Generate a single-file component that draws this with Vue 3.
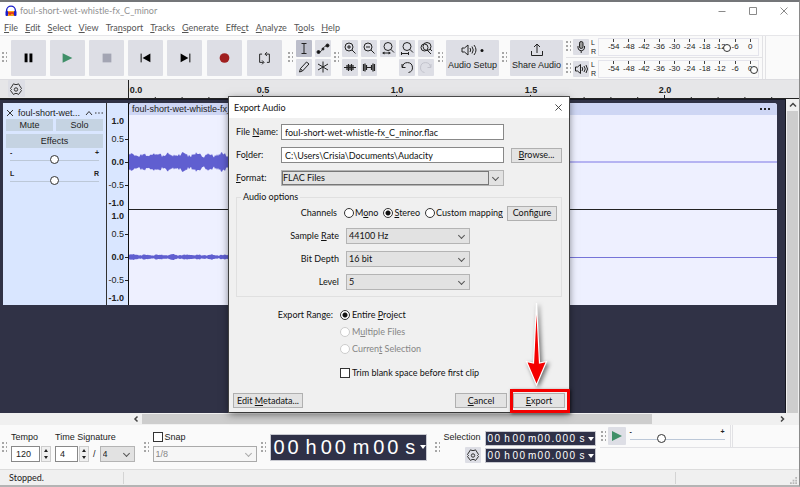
<script setup>
import { ref } from 'vue'

const menus = [
  ['', 'F', 'ile'], ['', 'E', 'dit'], ['', 'S', 'elect'], ['', 'V', 'iew'],
  ['Tra', 'n', 'sport'], ['', 'T', 'racks'], ['', 'G', 'enerate'], ['Effe', 'c', 't'],
  ['', 'A', 'nalyze'], ['T', 'o', 'ols'], ['', 'H', 'elp'],
]

const meterMarks = [-54, -48, -42, -36, -30, -24, -18, -12, -6, 0]
const meters = [
  { name: 'Record level', kind: 'mic', level: 83 },
  { name: 'Playback level', kind: 'speaker', level: 100 },
]

const secondWidth = 268
const majors = [0, 0.5, 1, 1.5, 2]
const minors = Array.from({ length: 25 }, (_, i) => i)

const channels = [
  { amp: 10, base: 4, zero: 47 },
  { amp: 3, base: 1, zero: 47 },
]

function wavePath(ch, seed) {
  let top = ''
  let bottom = ''
  for (let x = 0; x <= 140; x++) {
    const r = Math.abs(Math.sin(x * 12.9898 + seed) * 43758.5453) % 1
    const swell = 0.5 + 0.5 * Math.sin(x / 2.1 + seed)
    const a = ch.base + (ch.amp - ch.base) * (0.4 * swell + 0.6 * r)
    top += `${x ? 'L' : 'M'}${x} ${(ch.zero - a).toFixed(1)}`
    bottom = `L${x} ${(ch.zero + a).toFixed(1)}` + bottom
  }
  return top + bottom + 'Z'
}
const waves = channels.map((c, i) => wavePath(c, i * 5 + 1))

const bigDigits = [...'00h00m00s']
const smallDigits = [...'00h00m00.000s']
const cellClass = (c) => (c === '.' ? 'dot' : /\d/.test(c) ? 'digit' : 'mark')

const fileName = ref('foul-short-wet-whistle-fx_C_minor.flac')
const folder = ref('C:\\Users\\Crisia\\Documents\\Audacity')
const channelMode = ref('stereo')
const range = ref('entire')
const trim = ref(false)
const snap = ref(false)
const gain = ref(50)
const pan = ref(50)
const speed = ref(32)
const tempo = ref('120')
const beats = ref('4')
const gearPath = 'M5.500 2.800L7 3.500H9L10.500 2.800L13.500 7.500L12.500 8.500L13.500 9.500L10.500 13.500L9 12.500H7L5.500 13.500L2.500 9.500L3.500 8.500L2.500 7.500Z'
</script>

<template>
  <div class="app">
    <header class="titlebar">
      <svg class="logo" viewBox="0 0 12 12">
        <rect x="2" y="6" width="8" height="5" fill="#f5a31a" />
        <path d="M3 9l1-2 1 3 1-3 1 2 1-2 1 3" stroke="#e0301e" fill="none" />
        <path d="M1.6 7.5V5.5a4.4 4.4 0 0 1 8.8 0v2" stroke="#1a1ecb" stroke-width="1.4" fill="none" />
        <rect x="0.5" y="6" width="2.5" height="5" rx="1" fill="#1a1ecb" />
        <rect x="9" y="6" width="2.5" height="5" rx="1" fill="#1a1ecb" />
      </svg>
      <span class="title">foul-short-wet-whistle-fx_C_minor</span>
      <div class="wincontrols">
        <button aria-label="Minimize"><svg viewBox="0 0 8 8"><path d="M0.5 4.5h7" /></svg></button>
        <button aria-label="Maximize"><svg viewBox="0 0 8 8"><path d="M0.5 0.5h7v7h-7z" /></svg></button>
        <button aria-label="Close"><svg viewBox="0 0 8 8"><path d="M0.5 0.5l7 7M7.5 0.5l-7 7" /></svg></button>
      </div>
    </header>

    <nav class="menubar">
      <button v-for="m in menus" :key="m.join('')">{{ m[0] }}<u>{{ m[1] }}</u>{{ m[2] }}</button>
    </nav>

    <section class="toolbar">
      <i class="grip"></i>
      <div class="transport">
        <button aria-label="Pause"><svg viewBox="0 0 36 36"><path d="M14 14h3v9h-3zM19 14h3v9h-3z" fill="#000" /></svg></button>
        <button aria-label="Play"><svg viewBox="0 0 36 36"><path d="M13 13.500L23 18.500 13 23.500Z" fill="#3f8f68" /></svg></button>
        <button aria-label="Stop"><svg viewBox="0 0 36 36"><path d="M14 14h9v9h-9z" fill="#a3a5b3" /></svg></button>
        <button aria-label="Skip to start"><svg viewBox="0 0 36 36"><path d="M13.500 14v9" stroke="#000" /><path d="M23 14v9l-8-4.500z" fill="#000" /></svg></button>
        <button aria-label="Skip to end"><svg viewBox="0 0 36 36"><path d="M23.500 14v9" stroke="#000" /><path d="M14 14v9l8-4.500z" fill="#000" /></svg></button>
        <button aria-label="Record" class="spaced"><svg viewBox="0 0 36 36"><circle cx="18" cy="18.500" r="5" fill="#a01f1f" /></svg></button>
        <button aria-label="Loop" class="spaced"><svg viewBox="0 0 36 36" fill="none" stroke="#222"><path d="M15.500 14.500h-2.500v8.500h4M20.500 23h2.500v-8.500h-4" /><path d="M20.500 12.500l-2 2 2 2M15.500 21l2 2-2 2" /></svg></button>
      </div>
      <i class="grip"></i>
      <div class="tools two">
        <button aria-label="Selection tool" class="on"><svg viewBox="0 0 16 16"><path d="M5.500 3.500h5M5.500 13.500h5M8 3.500v10" /></svg></button>
        <button aria-label="Envelope tool"><svg viewBox="0 0 16 16"><path d="M3 12.500c5 0 4-7 10-7" /><circle cx="3.500" cy="12" r="1.500" fill="#111" /><circle cx="8" cy="9" r="1" fill="#111" /><circle cx="12.500" cy="5.500" r="1.500" fill="#111" /></svg></button>
        <button aria-label="Draw tool"><svg viewBox="0 0 16 16"><path d="M3.500 13l1-3.500 6-6.500 2.500 2-6.500 7zM4.500 9.500L6.500 12" /></svg></button>
        <button aria-label="Multi tool"><svg viewBox="0 0 16 16"><path d="M8 2.500v11M3 5l10 6M13 5L3 11" /></svg></button>
      </div>
      <i class="grip"></i>
      <div class="tools five">
        <button aria-label="Zoom in"><svg viewBox="0 0 16 16"><circle cx="7" cy="7" r="4" /><path d="M10 10l3.500 3.500M5 7h4M7 5v4" /></svg></button>
        <button aria-label="Zoom out"><svg viewBox="0 0 16 16"><circle cx="7" cy="7" r="4" /><path d="M10 10l3.500 3.500M5 7h4" /></svg></button>
        <button aria-label="Fit selection"><svg viewBox="0 0 16 16"><circle cx="8" cy="6.500" r="4" /><path d="M11 9.500l3 3M3 13h7" /><path d="M2 13l2.500-1.500v3zM11 13l-2.500-1.500v3z" fill="#222" stroke="none" /></svg></button>
        <button aria-label="Fit project"><svg viewBox="0 0 16 16"><circle cx="8" cy="6.500" r="4" /><path d="M11 9.500l3 3M2.500 13.500h7M2.500 12v3M9.500 12v3" /></svg></button>
        <button aria-label="Zoom toggle"><svg viewBox="0 0 16 16"><circle cx="9" cy="6.500" r="4" /><circle cx="6.500" cy="7.500" r="3.500" /><path d="M9 10l4 4M12 9l2 2" /></svg></button>
        <button aria-label="Trim audio"><svg viewBox="0 0 16 16"><path d="M2 8.500h12M5 6v5M6.500 5v7M8 6v5M9.500 5v7M11 6v5" stroke-width="1.200" /></svg></button>
        <button aria-label="Silence audio"><svg viewBox="0 0 16 16"><path d="M2.500 5v7M4 4.500v8M5.500 6v5M5 8.500h6M10.500 6v5M12 4.500v8M13.500 5v7" stroke-width="1.200" /></svg></button>
        <span></span>
        <button aria-label="Undo"><svg viewBox="0 0 16 16"><path d="M3 5v3.500h3.500M3.500 8a5 5 0 1 1 6 5.500" /></svg></button>
        <button aria-label="Redo" disabled><svg viewBox="0 0 16 16"><path d="M13 5v3.500H9.500M12.500 8a5 5 0 1 0-6 5.500" stroke="#c3c4cd" /></svg></button>
      </div>
      <i class="grip"></i>
      <button class="labelled">
        <svg viewBox="0 0 26 14" fill="none" stroke="#222"><path d="M2 5h2.500L8 2v10L4.500 9H2zM10 5q1.500 2 0 4M12 3.500q2.500 3.500 0 7M14 2q4 5 0 10" /><circle cx="22" cy="7.500" r="1.500" fill="#111" stroke="none" /></svg>
        Audio Setup
      </button>
      <i class="grip"></i>
      <button class="labelled">
        <svg viewBox="0 0 26 14" fill="none" stroke="#222"><path d="M7.500 8v4.500h11V8M13 10V1.500M10 4l3-3 3 3" /></svg>
        Share Audio
      </button>
      <div class="meters">
        <div v-for="m in meters" :key="m.name" class="meter">
          <i class="grip"></i>
          <button :aria-label="m.name">
            <svg v-if="m.kind === 'mic'" viewBox="0 0 16 16" fill="none" stroke="#222"><rect x="6.500" y="2.500" width="3.500" height="7" rx="1.700" fill="#999" /><path d="M5 7v2a3.300 3.300 0 0 0 6.500 0V7M8.200 12v2" /></svg>
            <svg v-else viewBox="0 0 16 16" fill="none" stroke="#222"><path d="M2.500 6h2l3-2.500v9L4.500 10h-2zM9 6q1.500 2 0 4M11 5q2.500 3 0 6M13 4q3 4 0 8" /></svg>
          </button>
          <div class="lr"><span>L</span><span>R</span></div>
          <div class="scale">
            <span v-for="n in meterMarks" :key="n">{{ n }}</span>
            <b class="knob" :style="{ left: m.level + '%' }"></b>
          </div>
        </div>
      </div>
      <div class="rest"></div>
    </section>

    <section class="timeline">
      <button aria-label="Timeline options"><svg viewBox="0 0 16 16"><path :d="gearPath" /><circle cx="8" cy="8.500" r="1.700" /></svg></button>
      <svg class="ticks">
        <path d="M0.500 0V20" stroke="#222" />
        <path v-for="i in minors" :key="i" :d="`M${i * 26.8 + 0.5} ${i % 5 ? 17 : 15}V20`" stroke="#222" />
        <text v-for="m in majors" :key="m" :x="m ? m * secondWidth + 1 : 8" y="13" text-anchor="middle">{{ m.toFixed(1) }}</text>
      </svg>
    </section>

    <main class="workspace">
      <div class="tracks">
        <aside class="panel">
          <div class="trackhead">
            <button aria-label="Delete track"><svg viewBox="0 0 8 8"><path d="M1 1l6 6M7 1L1 7" /></svg></button>
            <span>foul-short-wet...</span>
            <button aria-label="Collapse"><svg viewBox="0 0 8 8"><path d="M1 6l3-3.500L7 6" /></svg></button>
            <button aria-label="Track menu"><svg viewBox="0 0 8 8"><path d="M0 4h1.500M3.200 4h1.500M6.500 4H8" /></svg></button>
          </div>
          <div class="pair"><button>Mute</button><button>Solo</button></div>
          <button class="effects">Effects</button>
          <label class="slider"><span><b>-</b><b>+</b></span><input v-model="gain" type="range" aria-label="Gain" /></label>
          <label class="slider pan"><span><b>L</b><b>R</b></span><input v-model="pan" type="range" aria-label="Pan" /></label>
        </aside>
        <div class="vruler">
          <div v-for="c in 2" :key="c" class="vscale" :class="{ first: c === 1 }">
            <b>1.0</b><span class="t">0.5</span><b class="t">0.0</b><span class="t">-0.5</span><b>-1.0</b>
          </div>
        </div>
        <div class="clip">
          <div class="cliphead"><span>foul-short-wet-whistle-fx_C_minor</span><svg viewBox="0 0 12 4"><path d="M1 2h2M5 2h2M9 2h2" stroke="#222" stroke-width="2" /></svg></div>
          <svg v-for="(c, i) in channels" :key="i" class="wave">
            <rect x="0" width="100%" :y="i ? c.zero : c.zero - 1" :height="i ? 1 : 2" :fill="i ? '#7674d8' : '#b5b3f2'" />
            <path :d="waves[i]" fill="#605fd0" />
          </svg>
        </div>
      </div>
      <div class="vscroll"><svg viewBox="0 0 8 8"><path d="M1 5.500l3-3 3 3" /></svg><i></i></div>
    </main>

    <div class="hscroll">
      <svg viewBox="0 0 8 8"><path d="M5.500 1.500L3 4l2.500 2.500" /></svg>
      <i></i>
      <svg viewBox="0 0 8 8"><path d="M3 1.500L5.500 4 3 6.500" /></svg>
    </div>

    <footer class="bottom">
      <i class="grip"></i>
      <div class="field">
        <label for="tempo">Tempo</label>
        <div class="row"><span class="spin"><input id="tempo" v-model="tempo" class="w3" /><i class="arrows"></i></span></div>
      </div>
      <div class="field signature">
        <label for="beats">Time Signature</label>
        <div class="row">
          <span class="spin"><input id="beats" v-model="beats" class="w2" /><i class="arrows"></i></span>
          <em>/</em>
          <span class="drop unit"><select aria-label="Beat unit"><option>4</option></select></span>
        </div>
      </div>
      <i class="grip"></i>
      <div class="field snap">
        <label class="check"><input v-model="snap" type="checkbox" />Snap</label>
        <span class="drop off"><select aria-label="Snap to" disabled><option>1/8</option></select></span>
      </div>
      <i class="grip"></i>
      <div class="bigtime"><div class="cells"><span v-for="(c, i) in bigDigits" :key="i" :class="cellClass(c)">{{ c }}</span></div><i class="caret"></i></div>
      <i class="grip edge"></i>
      <div class="selection">
        <span>Selection</span>
        <button aria-label="Selection options"><svg viewBox="0 0 16 16"><path :d="gearPath" /><circle cx="8" cy="8.500" r="1.700" /></svg></button>
      </div>
      <div class="times">
        <div v-for="n in 2" :key="n" class="smalltime"><div class="cells"><span v-for="(c, i) in smallDigits" :key="i" :class="cellClass(c)">{{ c }}</span></div><i class="caret"></i></div>
      </div>
      <div class="playspeed">
        <div class="speedrow">
          <i class="grip"></i>
          <button aria-label="Play at speed"><svg viewBox="0 0 18 18"><path d="M4 4l10 5-10 5z" fill="#3f8f68" /></svg></button>
          <label class="slider speed"><span><b>-</b><b>+</b></span><input v-model="speed" type="range" aria-label="Playback speed" /></label>
          <i class="divider"></i>
        </div>
      </div>
    </footer>

    <div class="status">
      <span>Stopped.</span><span></span>
      <span><svg viewBox="0 0 8 8"><path d="M6 0h2v2H6zM6 3h2v2H6zM3 3h2v2H3zM6 6h2v2H6zM3 6h2v2H3zM0 6h2v2H0z" fill="#b8b8b8" /></svg></span>
    </div>

    <form class="dialog" role="dialog" aria-label="Export Audio" @submit.prevent>
      <div class="dtitle">
        <span>Export Audio</span>
        <button type="button" aria-label="Close dialog"><svg viewBox="0 0 8 8"><path d="M0.500 0.500l7 7M7.500 0.500l-7 7" /></svg></button>
      </div>
      <div class="dform">
        <label for="fname">File <u>N</u>ame:</label>
        <input id="fname" v-model="fileName" type="text" />
        <span></span>
        <label for="folder">Fo<u>l</u>der:</label>
        <input id="folder" v-model="folder" type="text" />
        <button type="button"><u>B</u>rowse...</button>
        <label for="format"><u>F</u>ormat:</label>
        <span class="drop focus"><select id="format"><option>FLAC Files</option></select></span>
      </div>
      <fieldset>
        <legend>Audio options</legend>
        <div class="opt">
          <span class="lab">Channels</span>
          <div class="radios">
            <label><input v-model="channelMode" type="radio" name="ch" value="mono" /><span>M<u>o</u>no</span></label>
            <label><input v-model="channelMode" type="radio" name="ch" value="stereo" /><span><u>S</u>tereo</span></label>
            <label><input v-model="channelMode" type="radio" name="ch" value="custom" /><span>Custom mappin<u>g</u></span></label>
          </div>
          <button type="button">Configure</button>
        </div>
        <div class="opt"><label class="lab" for="rate">Sample <u>R</u>ate</label><span class="drop"><select id="rate"><option>44100 Hz</option></select></span></div>
        <div class="opt"><label class="lab" for="depth">Bit Depth</label><span class="drop"><select id="depth"><option>16 bit</option></select></span></div>
        <div class="opt"><label class="lab" for="level">Level</label><span class="drop"><select id="level"><option>5</option></select></span></div>
      </fieldset>
      <div class="range">
        <span class="lab">Export Range:</span>
        <div class="choices">
          <label><input v-model="range" type="radio" name="range" value="entire" /><span>Entire <u>P</u>roject</span></label>
          <label class="dis"><input v-model="range" type="radio" name="range" value="multi" disabled /><span>M<u>u</u>ltiple Files</span></label>
          <label class="dis"><input v-model="range" type="radio" name="range" value="sel" disabled /><span>Curren<u>t</u> Selection</span></label>
          <label class="trim"><input v-model="trim" type="checkbox" />Trim blank space before first clip</label>
        </div>
      </div>
      <div class="actions">
        <button type="button" class="wide">Edit <u>M</u>etadata...</button>
        <button type="button" class="cancel"><u>C</u>ancel</button>
        <button type="submit" class="export"><u>E</u>xport</button>
      </div>
      <svg class="arrow" viewBox="0 0 24 88"><path d="M11.500 2L14.500 62 21.500 60.500 11.500 84 1.500 60.500 8.500 62Z" fill="#f40000" stroke="#fff" stroke-width="1.200" /></svg>
      <div class="highlight"></div>
    </form>
  </div>
</template>

<style>
body { background: #f0f0f0; }
</style>

<style scoped>
* { box-sizing: border-box; }
.app {
  position: relative;
  display: flex;
  flex-direction: column;
  min-height: 100vh;
  border-top: 2px solid #747679;
  border-right: 1px solid #8a8a8a;
  border-bottom: 2px solid #b4b4b4;
  background: #fff;
  color: #222;
  font: 9px/12px Lato, "Open Sans", sans-serif;
  overflow: hidden;
}
button, input, select { font: inherit; color: inherit; margin: 0; padding: 0; border: 0; background: none; }
i, em { font-style: normal; }
svg { display: block; }

.titlebar { display: flex; align-items: center; height: 18px; padding-left: 5px; gap: 3px; color: #929292; }
.logo { width: 12px; height: 12px; }
.title { flex: 1; }
.wincontrols { display: flex; gap: 23px; padding-right: 11px; }
.wincontrols svg { width: 8px; height: 8px; fill: none; stroke: #8a8a8a; stroke-width: 1; }

.menubar { display: flex; gap: 7px; height: 15px; padding-left: 4px; color: #555; }

.toolbar { display: flex; align-items: center; gap: 3px; height: 44px; border-top: 1px solid #e6e6e9; background: #fafafa; padding-left: 2px; }
.toolbar button, .timeline button, .selection button, .speedrow button { background: #dddee5; border-radius: 1px; }
.grip {
  flex: none;
  width: 5px;
  height: 11px;
  background: radial-gradient(circle at 1px 1px, #888 0.6px, transparent 1px) 0 0 / 4px 4px;
}
.transport { display: flex; gap: 4px; margin: 0 3px 0 1px; }
.transport button { width: 35px; height: 36px; }
.transport .spaced { margin-left: 1px; }
.tools { display: grid; gap: 2px 3px; }
.two { grid-template-columns: repeat(2, 16px); }
.five { grid-template-columns: repeat(5, 16px); margin-right: 1px; }
.tools button { width: 16px; height: 17px; }
.tools svg { width: 16px; height: 16px; fill: none; stroke: #222; stroke-width: 1; }
.tools .on { background: #bcbecb; }
.labelled { display: flex; flex-direction: column; align-items: center; gap: 2px; width: 53px; height: 36px; padding-top: 3px; font: 9px/12px "Liberation Sans", sans-serif; white-space: nowrap; }
.labelled svg { width: 26px; height: 14px; }
.meters { display: flex; flex-direction: column; width: 197px; border-right: 1px solid #e2e2e5; height: 100%; }
.meter { display: flex; align-items: center; flex: 1; gap: 2px; }
.meter + .meter { border-top: 1px solid #e2e2e5; }
.meter button, .meter button svg { width: 16px; height: 16px; }
.lr { display: flex; flex-direction: column; justify-content: space-between; font: 7px/9px "Liberation Sans", sans-serif; }
.scale { position: relative; display: flex; flex: 1; margin-right: 3px; height: 18px; border: 1px solid #e4e4ec; padding-left: 7px; font: 8px/10px "Liberation Sans", sans-serif; }
.scale span { flex: 1; display: flex; flex-direction: column; align-items: center; }
.scale span::before { content: ""; width: 1px; height: 3px; background: #444; }
.knob { position: absolute; top: 5px; width: 8px; height: 8px; margin-left: -8px; border: 1px solid #333; border-radius: 50%; background: #fffc; }
.rest { flex: 1; align-self: stretch; border-left: 1px solid #e2e2e5; margin-left: -1px; }

.timeline { display: flex; height: 20px; background: #e6e6e8; border-top: 1px solid #dcdce0; border-bottom: 1px solid #222; }
.timeline button { width: 17px; height: 17px; margin-left: 8px; }
.timeline button svg, .selection button svg { width: 16px; height: 16px; fill: none; stroke: #333; }
.ticks { flex: 1; height: 19px; margin-left: 103px; }
.ticks text { font: bold 9px "Liberation Sans", sans-serif; fill: #222; }

.workspace { display: flex; flex: 1; background: #30323f; }
.tracks { display: flex; align-items: flex-start; flex: 1; padding: 3px 8px 0 3px; border-top: 1px solid #191b28; background: #303246; border-right: 1px solid #15161f; font: 9px/12px "Liberation Sans", sans-serif; }
.panel, .vruler, .clip { height: 202px; }
.panel { width: 103px; padding: 3px; background: #d9e6ff; }
.trackhead { display: flex; align-items: center; gap: 2px; height: 13px; white-space: nowrap; }
.trackhead span { flex: 1; padding-left: 2px; }
.trackhead svg { width: 8px; height: 8px; fill: none; stroke: #333; stroke-width: 1; }
.pair { display: flex; gap: 3px; }
.pair button { flex: 1; height: 12px; background: #c5d3e2; }
.effects { display: block; width: 100%; height: 14px; margin-top: 3px; background: #c5d3e2; }
.slider { display: block; position: relative; margin: 1px 4px 0; height: 17px; }
.slider span { display: flex; justify-content: space-between; font-size: 7px; line-height: 7px; }
.slider input { display: block; width: 100%; height: 9px; margin-top: -1px; appearance: none; background: linear-gradient(#bcc8d8, #bcc8d8) 0 5px / 100% 1px no-repeat; }
.slider input::-webkit-slider-thumb { appearance: none; width: 9px; height: 9px; border: 1px solid #333; border-radius: 50%; background: #fff; }
.pan { margin-top: 4px; }
.vruler { width: 23px; border-left: 1px solid #333; border-right: 1px solid #111; background: #d9e6ff; }
.vscale { display: grid; grid-template-rows: 14px 22px 24px 22px 14px; align-items: center; justify-items: end; height: 96px; padding-right: 4px; line-height: 12px; }
.vscale.first { height: 106px; padding-top: 11px; }
.vscale > * { position: relative; }
.t::after { content: ""; position: absolute; right: -4px; top: 6px; width: 3px; height: 1px; background: #222; }
.clip { flex: 1; background: #eef0ff; border-radius: 3px 3px 0 0; overflow: hidden; }
.cliphead { display: flex; justify-content: space-between; align-items: center; height: 12px; padding: 0 6px 0 3px; background: #ced6f4; }
.cliphead svg { width: 12px; height: 4px; }
.wave { width: 100%; height: 94px; }
.wave + .wave { height: 96px; border-top: 1px solid #222; }
.vscroll { display: flex; flex-direction: column; align-items: center; width: 13px; background: #f0f0f0; padding-top: 2px; }
.vscroll svg, .hscroll svg { width: 8px; height: 8px; fill: none; stroke: #444; stroke-width: 1.5; }
.vscroll i { flex: 1; width: 11px; background: #cdcdcd; margin-top: 2px; }

.hscroll { display: flex; align-items: center; height: 12px; padding: 0 13px 0 132px; background: #f0f0f0; gap: 2px; }
.hscroll i { flex: none; width: 78%; height: 10px; background: #cdcdcd; }
.hscroll svg:last-child { margin-left: auto; }

.bottom { display: flex; align-items: center; height: 44px; padding-left: 2px; background: #fafafa; gap: 4px; font: 9px/12px "Liberation Sans", sans-serif; }
.field { display: flex; flex-direction: column; gap: 3px; height: 32px; }
.field label { line-height: 12px; white-space: nowrap; }
.signature { margin-right: 5px; }
.row { display: flex; align-items: center; height: 16px; gap: 4px; }
.spin { display: flex; gap: 1px; }
.spin input { height: 16px; border: 1px solid #888; padding-left: 4px; background: #fff; }
.spin .w3 { width: 29px; }
.spin .w2 { width: 23px; }
.arrows { display: flex; flex-direction: column; width: 10px; height: 16px; border: 1px solid #ccc; background: #f0f0f0; justify-content: space-around; align-items: center; }
.arrows::before { content: ""; border: 2px solid transparent; border-top: 0; border-bottom: 3px solid #222; }
.arrows::after { content: ""; border: 2px solid transparent; border-bottom: 0; border-top: 3px solid #222; }
.drop { position: relative; display: block; height: 16px; border: 1px solid #b4b4b4; background: #e2e2e2; }
.drop select { display: block; width: 100%; height: 14px; appearance: none; padding-left: 2px; outline: 0; }
.drop::after { content: ""; position: absolute; right: 5px; top: 4px; width: 4px; height: 4px; border: solid #555; border-width: 0 1px 1px 0; transform: rotate(45deg); pointer-events: none; }
.unit { width: 35px; }
.off { width: 104px; background: #f6f6f6; border-color: #aaa; color: #888; }
.off select { opacity: 1; }
.off::after { border-color: #aaa; }
.snap { width: 104px; }
.check, .choices label, .radios label { display: flex; align-items: center; gap: 2px; }
input[type=checkbox], input[type=radio] { appearance: none; flex: none; width: 10px; height: 10px; border: 1px solid #333; background: #fff; }
input[type=radio] { border-radius: 50%; }
input[type=radio]:checked { background: radial-gradient(circle, #111 2px, #fff 3px); }
input:disabled { border-color: #ccc; }
.cells { display: flex; }
.bigtime { display: flex; align-items: center; justify-content: space-between; width: 157px; height: 27px; padding-left: 3px; border: 1px solid #c8c9d0; background: #2f3147; color: #fff; font-size: 20px; white-space: nowrap; }
.bigtime .digit { width: 14px; }
.bigtime .mark { padding: 0 4px; }
.bigtime .mark:last-child { padding-right: 0; }
.caret { flex: none; border: 3px solid transparent; border-top: 4px solid #fff; border-bottom: 0; }
.edge { margin-left: 4px; }
.selection { display: flex; flex-direction: column; align-items: flex-end; gap: 4px; }
.selection button { width: 16px; height: 16px; }
.times { display: flex; flex-direction: column; gap: 2px; }
.smalltime { display: flex; align-items: center; justify-content: space-between; width: 111px; height: 15px; padding: 0 1px 0 2px; border: 1px solid #c8c9d0; background: #2f3147; color: #fff; font-size: 10px; }
.smalltime .digit { width: 7px; }
.smalltime .mark { width: 11px; text-align: center; }
.smalltime .dot { width: 4px; }
.playspeed { flex: 1; align-self: stretch; }
.speedrow { display: flex; align-items: center; gap: 2px; height: 23px; border-bottom: 1px solid #e2e2e5; padding-left: 1px; }
.speedrow button { width: 18px; height: 18px; }
.speed { width: 95px; margin: 0 3px 0 2px; }
.divider { align-self: stretch; width: 3px; border: solid #e2e2e5; border-width: 0 1px; }

.status { display: flex; align-items: center; height: 16px; background: #f0f0f0; border-top: 1px solid #dcdcdc; }
.status span { height: 12px; border-right: 1px solid #d4d4d4; }
.status span:nth-child(1) { width: 124px; padding-left: 9px; }
.status span:nth-child(2) { flex: 1; }
.status span:nth-child(3) { display: flex; justify-content: flex-end; align-items: flex-end; width: 123px; padding-right: 2px; border: 0; }
.status svg { width: 7px; height: 7px; }

.dialog { position: absolute; left: 229px; top: 95px; width: 340px; background: #f0f0f0; box-shadow: 0 2px 8px #0008, 0 0 0 1px #555; color: #111; padding-bottom: 4px; }
.dtitle { display: flex; align-items: center; justify-content: space-between; height: 21px; padding: 0 7px 0 5px; background: #fff; }
.dtitle svg { width: 7px; height: 7px; fill: none; stroke: #333; stroke-width: 1; }
.dform { display: grid; grid-template-columns: 45px 223px 58px; grid-auto-rows: 16px; align-items: center; gap: 7px 0; padding: 6px 7px 0; }
.dform > button { margin-left: 7px; width: 51px; }
.dform label { white-space: nowrap; }
.dform input { height: 16px; padding-left: 3px; border: 1px solid #888; background: #fff; }
.dialog button { white-space: nowrap; }
.dform > button, .opt button, .actions button { height: 15px; border: 1px solid #b0b0b0; background: #e3e3e3; }
.focus select { width: calc(100% - 14px); border: 1px solid #777; padding-left: 0; }
fieldset { margin: 5px 7px 0; padding: 2px 4px 6px; border: 1px solid #e0e0e0; min-width: 0; }
legend { padding: 0 2px; line-height: 12px; }
.opt { display: flex; align-items: center; gap: 7px; height: 16px; }
.opt + .opt { margin-top: 7px; }
.lab { width: 98px; text-align: right; white-space: nowrap; }
.radios { display: flex; gap: 5px; width: 156px; white-space: nowrap; }
.radios label { gap: 1px; }
.opt button { width: 51px; }
.opt .drop { width: 124px; }
.range { display: flex; gap: 7px; margin-top: 12px; padding-left: 6px; }
.choices { display: flex; flex-direction: column; gap: 5px; }
.dis { color: #868686; }
.trim { margin-top: 7px; }
.actions { display: flex; gap: 6px; padding: 0 4px; margin-top: 14px; }
.actions button { width: 52px; }
.actions .wide { width: 70px; }
.cancel { margin-left: auto; }
.arrow { position: absolute; right: 20px; top: 204px; width: 24px; height: 88px; filter: drop-shadow(2px 2px 2px #0008); }
.highlight { position: absolute; right: -1px; bottom: -1px; width: 60px; height: 24px; border: 3px solid #f40000; box-shadow: 1px 1px 3px #0008; pointer-events: none; }
</style>
